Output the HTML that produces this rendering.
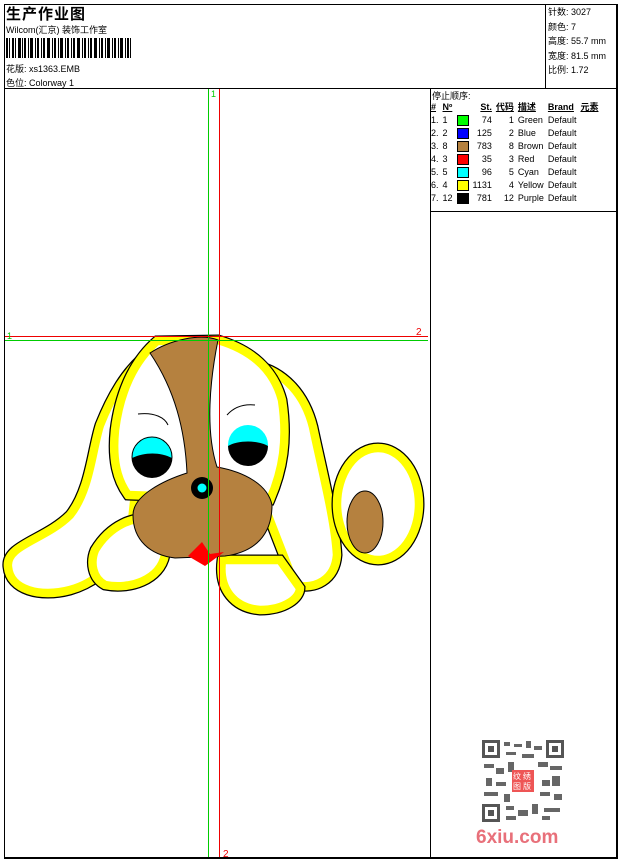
<!DOCTYPE html>
<html><head><meta charset="utf-8"><style>
body{margin:0;width:620px;height:860px;background:#fff;position:relative;overflow:hidden;font-family:"Liberation Sans","Noto Sans CJK SC",sans-serif;color:#000}
.a{position:absolute}
.t{font-size:9px;white-space:nowrap}
table{border-collapse:collapse;font-size:9px}
td{padding:0 2px;height:13px;line-height:13px;white-space:nowrap}
.sw{display:inline-block;width:10px;height:9px;border:1px solid #000;vertical-align:middle}
</style></head><body>
<div class="a" style="left:4px;top:4px;width:611px;height:852px;border:2px solid #000;box-sizing:content-box;border-width:1px 2px 2px 1px"></div>
<div class="a" style="left:4px;top:88px;width:613px;height:1px;background:#000"></div>
<div class="a" style="left:545px;top:4px;width:1px;height:84px;background:#000"></div>
<div class="a" style="left:430px;top:88px;width:1px;height:770px;background:#000"></div>
<div class="a" style="left:430px;top:211px;width:187px;height:1px;background:#000"></div>

<div class="a" style="left:6px;top:3px;font-size:15px;font-weight:bold;letter-spacing:1px">生产作业图</div>
<div class="a t" style="left:6px;top:23px">Wilcom(汇京) 装饰工作室</div>
<svg class="a" style="left:6px;top:38px" width="126" height="20">
<g fill="#000">
<rect x="0" width="2" height="20"/><rect x="3" width="1" height="20"/><rect x="6" width="2" height="20"/><rect x="9" width="1" height="20"/><rect x="12" width="3" height="20"/><rect x="16" width="1" height="20"/><rect x="18" width="2" height="20"/><rect x="22" width="1" height="20"/><rect x="24" width="3" height="20"/><rect x="29" width="1" height="20"/><rect x="31" width="2" height="20"/><rect x="35" width="1" height="20"/><rect x="37" width="2" height="20"/><rect x="41" width="3" height="20"/><rect x="46" width="1" height="20"/><rect x="48" width="2" height="20"/><rect x="52" width="1" height="20"/><rect x="54" width="3" height="20"/><rect x="59" width="1" height="20"/><rect x="61" width="2" height="20"/><rect x="65" width="1" height="20"/><rect x="67" width="2" height="20"/><rect x="71" width="3" height="20"/><rect x="76" width="1" height="20"/><rect x="78" width="2" height="20"/><rect x="82" width="1" height="20"/><rect x="84" width="2" height="20"/><rect x="88" width="3" height="20"/><rect x="93" width="1" height="20"/><rect x="95" width="2" height="20"/><rect x="99" width="1" height="20"/><rect x="101" width="3" height="20"/><rect x="106" width="1" height="20"/><rect x="108" width="2" height="20"/><rect x="112" width="1" height="20"/><rect x="114" width="3" height="20"/><rect x="119" width="1" height="20"/><rect x="121" width="2" height="20"/><rect x="124" width="1" height="20"/>
</g></svg>
<div class="a t" style="left:6px;top:62px">花版: xs1363.EMB</div>
<div class="a t" style="left:6px;top:76px">色位: Colorway 1</div>

<div class="a t" style="left:548px;top:5px;line-height:14.5px">针数: 3027<br>颜色: 7<br>高度: 55.7 mm<br>宽度: 81.5 mm<br>比例: 1.72</div>

<div class="a t" style="left:432px;top:89px">停止顺序:</div>
<table class="a" style="left:429px;top:101px">
<tr style="font-weight:bold;text-decoration:underline"><td>#</td><td>Nº</td><td></td><td style="text-align:right">St.</td><td>代码</td><td>描述</td><td>Brand</td><td>元素</td></tr>
<tr><td>1.</td><td>1</td><td><span class="sw" style="background:#0f0"></span></td><td style="text-align:right">74</td><td style="text-align:right">1</td><td>Green</td><td>Default</td><td></td></tr>
<tr><td>2.</td><td>2</td><td><span class="sw" style="background:#00f"></span></td><td style="text-align:right">125</td><td style="text-align:right">2</td><td>Blue</td><td>Default</td><td></td></tr>
<tr><td>3.</td><td>8</td><td><span class="sw" style="background:#b5813f"></span></td><td style="text-align:right">783</td><td style="text-align:right">8</td><td>Brown</td><td>Default</td><td></td></tr>
<tr><td>4.</td><td>3</td><td><span class="sw" style="background:#f00"></span></td><td style="text-align:right">35</td><td style="text-align:right">3</td><td>Red</td><td>Default</td><td></td></tr>
<tr><td>5.</td><td>5</td><td><span class="sw" style="background:#0ff"></span></td><td style="text-align:right">96</td><td style="text-align:right">5</td><td>Cyan</td><td>Default</td><td></td></tr>
<tr><td>6.</td><td>4</td><td><span class="sw" style="background:#ff0"></span></td><td style="text-align:right">1131</td><td style="text-align:right">4</td><td>Yellow</td><td>Default</td><td></td></tr>
<tr><td>7.</td><td>12</td><td><span class="sw" style="background:#000"></span></td><td style="text-align:right">781</td><td style="text-align:right">12</td><td>Purple</td><td>Default</td><td></td></tr>
</table>

<svg class="a" style="left:0;top:0" width="430" height="860">
<!-- left ear -->
<path d="M150,352 C125,370 110,400 100,425 C92,450 90,490 70,515 C45,540 5,545 8,567 C10,590 40,598 70,590 C95,583 115,565 130,540 Z" fill="#fff" stroke="#000" stroke-width="11"/>
<path d="M150,352 C125,370 110,400 100,425 C92,450 90,490 70,515 C45,540 5,545 8,567 C10,590 40,598 70,590 C95,583 115,565 130,540 Z" fill="#fff" stroke="#ff0" stroke-width="8.5"/>
<!-- right ear -->
<path d="M255,365 C285,372 305,395 313,427 C322,470 335,520 337,555 C335,580 315,590 295,585 L262,500 Z" fill="#fff" stroke="#000" stroke-width="11"/>
<path d="M255,365 C285,372 305,395 313,427 C322,470 335,520 337,555 C335,580 315,590 295,585 L262,500 Z" fill="#fff" stroke="#ff0" stroke-width="8.5"/>
<!-- tail -->
<ellipse cx="378" cy="504" rx="41" ry="56" fill="#fff" stroke="#000" stroke-width="11"/>
<ellipse cx="378" cy="504" rx="41" ry="56" fill="#fff" stroke="#ff0" stroke-width="8.5"/>
<ellipse cx="365" cy="522" rx="18" ry="31" fill="#b5813f" stroke="#000" stroke-width="1"/>
<!-- head -->
<path d="M157,341 C135,360 120,390 115,430 C112,460 117,480 128,495 L270,500 C283,470 288,440 282,400 C274,370 252,350 218,340 Z" fill="#fff" stroke="#000" stroke-width="11"/>
<path d="M157,341 C135,360 120,390 115,430 C112,460 117,480 128,495 L270,500 C283,470 288,440 282,400 C274,370 252,350 218,340 Z" fill="#fff" stroke="#ff0" stroke-width="8.5"/>
<!-- paws -->
<path d="M95,550 C110,525 135,515 150,520 L165,555 C160,580 130,590 105,585 C92,578 90,562 95,550 Z" fill="#fff" stroke="#000" stroke-width="11"/>
<path d="M95,550 C110,525 135,515 150,520 L165,555 C160,580 130,590 105,585 C92,578 90,562 95,550 Z" fill="#fff" stroke="#ff0" stroke-width="8.5"/>
<path d="M222,560 C218,590 235,608 260,610 C285,610 300,598 300,588 L280,560 Z" fill="#fff" stroke="#000" stroke-width="11"/>
<path d="M222,560 C218,590 235,608 260,610 C285,610 300,598 300,588 L280,560 Z" fill="#fff" stroke="#ff0" stroke-width="8.5"/>
<!-- brown blaze -->
<path d="M150,353 C170,340 200,333 218,340 C210,380 205,430 217,467 C245,472 268,485 272,505 C272,535 255,552 225,556 L175,558 C150,555 133,540 133,515 C133,495 165,480 187,473 C185,430 175,390 150,353 Z" fill="#b5813f" stroke="#000" stroke-width="1"/>
<path d="M188,556 L202,542 L210,554 L224,552 L205,566 Z" fill="#f00"/>
<!-- eyes -->
<circle cx="152" cy="457" r="20" fill="#0ff" stroke="#000" stroke-width="1"/>
<path d="M132,458 A20,20 0 0 0 172,458 C160,452 145,452 132,458 Z" fill="#000"/>
<circle cx="248" cy="445" r="20" fill="#0ff"/>
<path d="M228,446 A20,20 0 0 0 268,446 C258,440 238,440 228,446 Z" fill="#000"/>
<path d="M138,414 C155,412 165,418 168,425" fill="none" stroke="#000"/>
<path d="M227,415 C235,406 245,404 255,405" fill="none" stroke="#000"/>
<circle cx="202" cy="488" r="11" fill="#000"/>
<circle cx="202" cy="488" r="4.5" fill="#0ff"/>
<!-- guide lines -->
<line x1="208.5" y1="89" x2="208.5" y2="857" stroke="#0c0" stroke-width="1"/>
<line x1="219.5" y1="89" x2="219.5" y2="857" stroke="#e00" stroke-width="1"/>
<line x1="5" y1="336.5" x2="428" y2="336.5" stroke="#e00" stroke-width="1"/>
<line x1="5" y1="340.5" x2="428" y2="340.5" stroke="#0c0" stroke-width="1"/>
<text x="211" y="97" font-size="9" fill="#0c0" font-family="Liberation Sans">1</text>
<text x="7" y="339" font-size="9" fill="#0c0" font-family="Liberation Sans">1</text>
<text x="416" y="335" font-size="10" fill="#e00" font-family="Liberation Sans">2</text>
<text x="223" y="857" font-size="10" fill="#e00" font-family="Liberation Sans">2</text>
</svg>

<!-- QR -->
<svg class="a" style="left:482px;top:740px" width="82" height="82">
<rect width="82" height="82" fill="#fff"/>
<g fill="#555">
<rect x="0" y="0" width="18" height="18"/><rect x="64" y="0" width="18" height="18"/><rect x="0" y="64" width="18" height="18"/>
</g>
<g fill="#fff"><rect x="3" y="3" width="12" height="12"/><rect x="67" y="3" width="12" height="12"/><rect x="3" y="67" width="12" height="12"/></g>
<g fill="#555"><rect x="6" y="6" width="6" height="6"/><rect x="70" y="6" width="6" height="6"/><rect x="6" y="70" width="6" height="6"/></g>
<g fill="#666">
<rect x="22" y="2" width="6" height="4"/><rect x="32" y="4" width="8" height="3"/><rect x="44" y="1" width="5" height="7"/><rect x="52" y="6" width="8" height="4"/><rect x="24" y="12" width="10" height="3"/><rect x="40" y="14" width="12" height="4"/>
<rect x="2" y="24" width="10" height="4"/><rect x="14" y="28" width="8" height="6"/><rect x="26" y="22" width="6" height="10"/><rect x="56" y="22" width="10" height="5"/><rect x="68" y="26" width="12" height="4"/>
<rect x="4" y="38" width="6" height="8"/><rect x="14" y="42" width="10" height="4"/><rect x="60" y="40" width="8" height="6"/><rect x="70" y="36" width="8" height="10"/>
<rect x="2" y="52" width="14" height="4"/><rect x="22" y="54" width="6" height="8"/><rect x="58" y="52" width="10" height="4"/><rect x="72" y="54" width="8" height="6"/>
<rect x="24" y="66" width="8" height="4"/><rect x="36" y="70" width="10" height="6"/><rect x="50" y="64" width="6" height="10"/><rect x="62" y="68" width="16" height="4"/><rect x="24" y="76" width="10" height="4"/><rect x="60" y="76" width="8" height="4"/>
</g>
<rect x="30" y="30" width="22" height="22" fill="#e55"/>
<g fill="#fff" font-size="8" font-family="Noto Sans CJK SC"><text x="31" y="39">纹</text><text x="41" y="39">绣</text><text x="31" y="49">图</text><text x="41" y="49">版</text></g>
</svg>
<div class="a" style="left:476px;top:827px;font-size:19px;font-weight:bold;color:#e8707a;font-family:'Liberation Sans',sans-serif">6xiu.com</div>
</body></html>
